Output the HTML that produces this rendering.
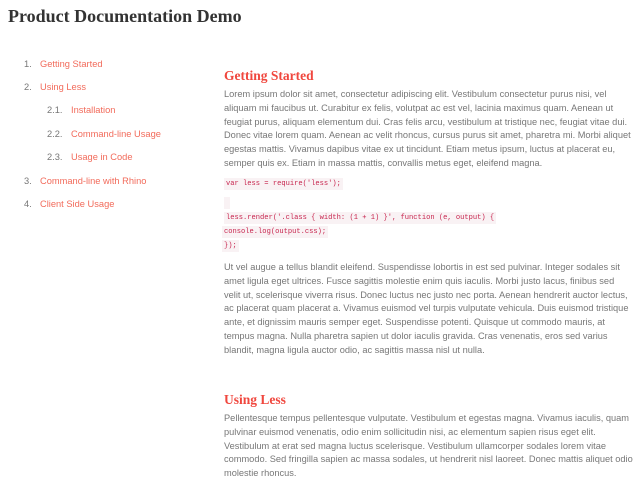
<!DOCTYPE html>
<html><head><style>
body{margin:0;width:640px;height:480px;background:#fff;position:relative;overflow:hidden;font-family:"Liberation Sans",sans-serif;}
.a{position:absolute;white-space:nowrap;}
h1{position:absolute;left:8px;top:6px;margin:0;font:bold 18px "Liberation Serif",serif;color:#333;}
.nav{font-size:9.3px;color:#f26b5b;}
.nav span{color:#777;position:absolute;}
.h{font:bold 13.5px "Liberation Serif",serif;color:#f0473e;}
.p{font-size:9.25px;line-height:13.8px;color:#777;}
.c{font:7.1px "Liberation Mono",monospace;color:#c7254e;background:#f9f2f4;padding:2px 2px;}
</style></head><body>
<h1>Product Documentation Demo</h1>
<div class="a nav" style="left:40px;top:59px"><span style="left:-16px">1.</span>Getting Started</div>
<div class="a nav" style="left:40px;top:82px"><span style="left:-16px">2.</span>Using Less</div>
<div class="a nav" style="left:71px;top:105px"><span style="left:-24px">2.1.</span>Installation</div>
<div class="a nav" style="left:71px;top:129px"><span style="left:-24px">2.2.</span>Command-line Usage</div>
<div class="a nav" style="left:71px;top:152px"><span style="left:-24px">2.3.</span>Usage in Code</div>
<div class="a nav" style="left:40px;top:176px"><span style="left:-16px">3.</span>Command-line with Rhino</div>
<div class="a nav" style="left:40px;top:199px"><span style="left:-16px">4.</span>Client Side Usage</div>

<div class="a h" style="left:224px;top:68px">Getting Started</div>
<div class="a p" style="left:224px;top:88px">Lorem ipsum dolor sit amet, consectetur adipiscing elit. Vestibulum consectetur purus nisi, vel<br>aliquam mi faucibus ut. Curabitur ex felis, volutpat ac est vel, lacinia maximus quam. Aenean ut<br>feugiat purus, aliquam elementum dui. Cras felis arcu, vestibulum at tristique nec, feugiat vitae dui.<br>Donec vitae lorem quam. Aenean ac velit rhoncus, cursus purus sit amet, pharetra mi. Morbi aliquet<br>egestas mattis. Vivamus dapibus vitae ex ut tincidunt. Etiam metus ipsum, luctus at placerat eu,<br>semper quis ex. Etiam in massa mattis, convallis metus eget, eleifend magna.</div>
<div class="a c" style="left:224px;top:178px">var less = require('less');</div>
<div class="a c" style="left:224px;top:197px;width:2px;height:8px"></div>
<div class="a c" style="left:224px;top:212px">less.render('.class { width: (1 + 1) }', function (e, output) {</div>
<div class="a c" style="left:222px;top:226px">console.log(output.css);</div>
<div class="a c" style="left:222px;top:240px">});</div>
<div class="a p" style="left:224px;top:261px">Ut vel augue a tellus blandit eleifend. Suspendisse lobortis in est sed pulvinar. Integer sodales sit<br>amet ligula eget ultrices. Fusce sagittis molestie enim quis iaculis. Morbi justo lacus, finibus sed<br>velit ut, scelerisque viverra risus. Donec luctus nec justo nec porta. Aenean hendrerit auctor lectus,<br>ac placerat quam placerat a. Vivamus euismod vel turpis vulputate vehicula. Duis euismod tristique<br>ante, et dignissim mauris semper eget. Suspendisse potenti. Quisque ut commodo mauris, at<br>tempus magna. Nulla pharetra sapien ut dolor iaculis gravida. Cras venenatis, eros sed varius<br>blandit, magna ligula auctor odio, ac sagittis massa nisl ut nulla.</div>
<div class="a h" style="left:224px;top:392px">Using Less</div>
<div class="a p" style="left:224px;top:412px">Pellentesque tempus pellentesque vulputate. Vestibulum et egestas magna. Vivamus iaculis, quam<br>pulvinar euismod venenatis, odio enim sollicitudin nisi, ac elementum sapien risus eget elit.<br>Vestibulum at erat sed magna luctus scelerisque. Vestibulum ullamcorper sodales lorem vitae<br>commodo. Sed fringilla sapien ac massa sodales, ut hendrerit nisl laoreet. Donec mattis aliquet odio<br>molestie rhoncus.</div>
</body></html>
